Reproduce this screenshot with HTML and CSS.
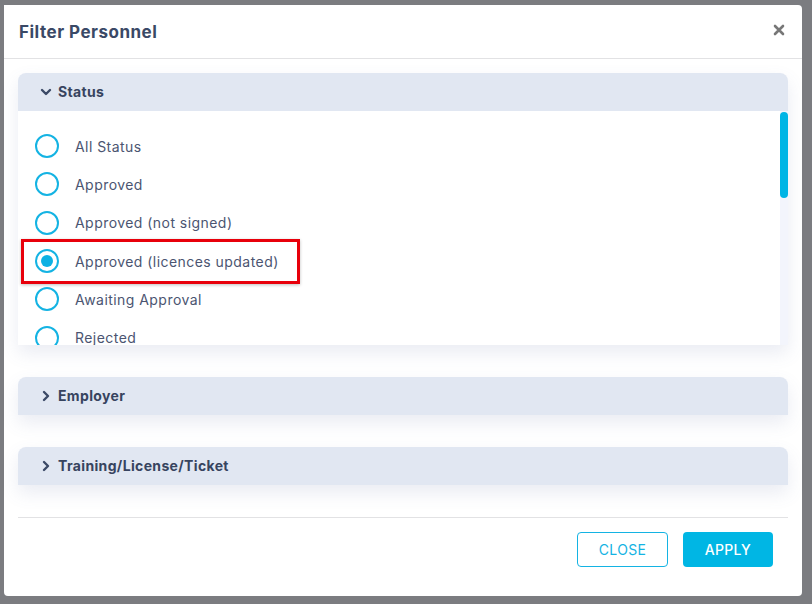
FILE: index.html
```html
<!DOCTYPE html>
<html lang="en">
<head>
    <meta charset="UTF-8">
    <meta name="viewport" content="width=device-width, initial-scale=1.0">
    <title>Filter Personnel</title>
    <link rel="stylesheet" href="styles.css">
</head>
<body>
    <div class="backdrop">
        <div class="modal">
            <div class="modal-header">
                <h2>Filter Personnel</h2>
                <button class="close-x" aria-label="Close">
                    <svg width="12" height="12" viewBox="0 0 12 12">
                        <path d="M2 2 L10 10 M10 2 L2 10" stroke="#777" stroke-width="2.6" stroke-linecap="round"/>
                    </svg>
                </button>
            </div>

            <div class="modal-body">
                <div class="panel">
                    <div class="panel-head">
                        <svg class="chev" width="12" height="12" viewBox="0 0 12 12">
                            <path d="M2 4 L6 8 L10 4" fill="none" stroke="#3b4966" stroke-width="2.4" stroke-linecap="round" stroke-linejoin="round"/>
                        </svg>
                        <span>Status</span>
                    </div>
                    <div class="panel-content">
                        <ul class="radio-list">
                            <li><span class="radio"></span>All Status</li>
                            <li><span class="radio"></span>Approved</li>
                            <li><span class="radio"></span>Approved (not signed)</li>
                            <li class="checked marked"><span class="radio"></span>Approved (licences updated)</li>
                            <li><span class="radio"></span>Awaiting Approval</li>
                            <li><span class="radio"></span>Rejected</li>
                            <li><span class="radio"></span>Pending Induction</li>
                            <li><span class="radio"></span>Inducted</li>
                            <li><span class="radio"></span>Suspended</li>
                            <li><span class="radio"></span>Expired</li>
                            <li><span class="radio"></span>Inactive</li>
                            <li><span class="radio"></span>Archived</li>
                            <li><span class="radio"></span>Draft</li>
                            <li><span class="radio"></span>Incomplete</li>
                            <li><span class="radio"></span>On Hold</li>
                            <li><span class="radio"></span>Terminated</li>
                        </ul>
                        <div class="scroll-track"><div class="scroll-thumb"></div></div>
                    </div>
                </div>

                <div class="panel">
                    <div class="panel-head">
                        <svg class="chev" width="12" height="12" viewBox="0 0 12 12">
                            <path d="M4 2 L8 6 L4 10" fill="none" stroke="#3b4966" stroke-width="2.4" stroke-linecap="round" stroke-linejoin="round"/>
                        </svg>
                        <span>Employer</span>
                    </div>
                </div>

                <div class="panel">
                    <div class="panel-head">
                        <svg class="chev" width="12" height="12" viewBox="0 0 12 12">
                            <path d="M4 2 L8 6 L4 10" fill="none" stroke="#3b4966" stroke-width="2.4" stroke-linecap="round" stroke-linejoin="round"/>
                        </svg>
                        <span>Training/License/Ticket</span>
                    </div>
                </div>

                <div class="modal-footer">
                    <button class="btn btn-outline">CLOSE</button>
                    <button class="btn btn-primary">APPLY</button>
                </div>
            </div>
        </div>
    </div>
</body>
</html>
```

FILE: styles.css
```css
html, body {
    margin: 0;
    padding: 0;
}
body {
    font-family: Inter, "Open Sans", sans-serif;
    background-color: #7b7c80;
    width: 812px;
    height: 604px;
    overflow: hidden;
}
.backdrop {
    padding: 5px 0 0 4px;
}
.modal {
    width: 798px;
    height: 591px;
    background-color: #fff;
    border-radius: 0 4px 4px 4px;
    display: flex;
    flex-direction: column;
}
.modal-header {
    height: 54px;
    flex-shrink: 0;
    border-bottom: 1px solid #e2e2e4;
    display: flex;
    align-items: center;
    justify-content: space-between;
    padding: 0 17px 0 15px;
    box-sizing: border-box;
}
.modal-header h2 {
    margin: 0;
    font-size: 17px;
    font-weight: 700;
    color: #3a4966;
    letter-spacing: 0.5px;
}
.close-x {
    border: none;
    background: none;
    padding: 0;
    width: 12px;
    height: 12px;
    margin-top: -3px;
    cursor: pointer;
}
.modal-body {
    padding: 14px 14px 0 14px;
    flex: 1;
    display: flex;
    flex-direction: column;
    gap: 32px;
}
.panel {
    border-radius: 8px 8px 0 0;
    box-shadow: 0 8px 18px rgba(90, 110, 160, 0.13);
    background-color: #fff;
}
.panel-head {
    height: 38px;
    background-color: #e1e7f2;
    border-radius: 8px 8px 0 0;
    display: flex;
    align-items: center;
    padding-left: 22px;
    padding-bottom: 1px;
    font-size: 14px;
    font-weight: 700;
    color: #37445f;
    letter-spacing: 0.35px;
    box-sizing: border-box;
}
.panel-head .chev {
    margin-right: 6px;
}
.panel-content {
    height: 234px;
    overflow: hidden;
    position: relative;
}
.scroll-track {
    position: absolute;
    top: 0;
    right: 0;
    width: 8px;
    height: 100%;
    background-color: #f3f5fc;
}
.scroll-thumb {
    margin-top: 1px;
    height: 86px;
    border-radius: 4px;
    background-color: #00b5e5;
}
.radio-list {
    list-style: none;
    margin: 0;
    padding: 16px 0 0 0;
}
.radio-list li {
    height: 38.3px;
    display: flex;
    align-items: center;
    padding-left: 17px;
    font-size: 14px;
    color: #4b5571;
    letter-spacing: 0.45px;
    position: relative;
}
.radio {
    width: 24px;
    height: 24px;
    border: 2px solid #14b3e3;
    border-radius: 50%;
    box-sizing: border-box;
    margin-right: 16px;
    display: flex;
    align-items: center;
    justify-content: center;
}
.checked .radio::before {
    content: "";
    width: 12px;
    height: 12px;
    border-radius: 50%;
    background-color: #0cb1e3;
}
.marked::after {
    content: "";
    position: absolute;
    left: 3px;
    top: -3px;
    width: 279px;
    height: 45px;
    border: 3px solid #e8000b;
    box-sizing: border-box;
    box-shadow: 0 1px 3px rgba(0, 0, 0, 0.25);
}
.modal-footer {
    border-top: 1px solid #e2e2e4;
    display: flex;
    justify-content: flex-end;
    gap: 15px;
    padding: 14px 15px 0 0;
}
.btn {
    height: 35px;
    font-family: inherit;
    font-size: 14px;
    border-radius: 4px;
    box-sizing: border-box;
    cursor: pointer;
    letter-spacing: 0.3px;
}
.btn-outline {
    width: 91px;
    background-color: #fff;
    border: 1px solid #14b3e3;
    color: #14b3e3;
}
.btn-primary {
    width: 90px;
    background-color: #00b6e4;
    border: none;
    color: #fff;
    font-weight: 500;
}
```
